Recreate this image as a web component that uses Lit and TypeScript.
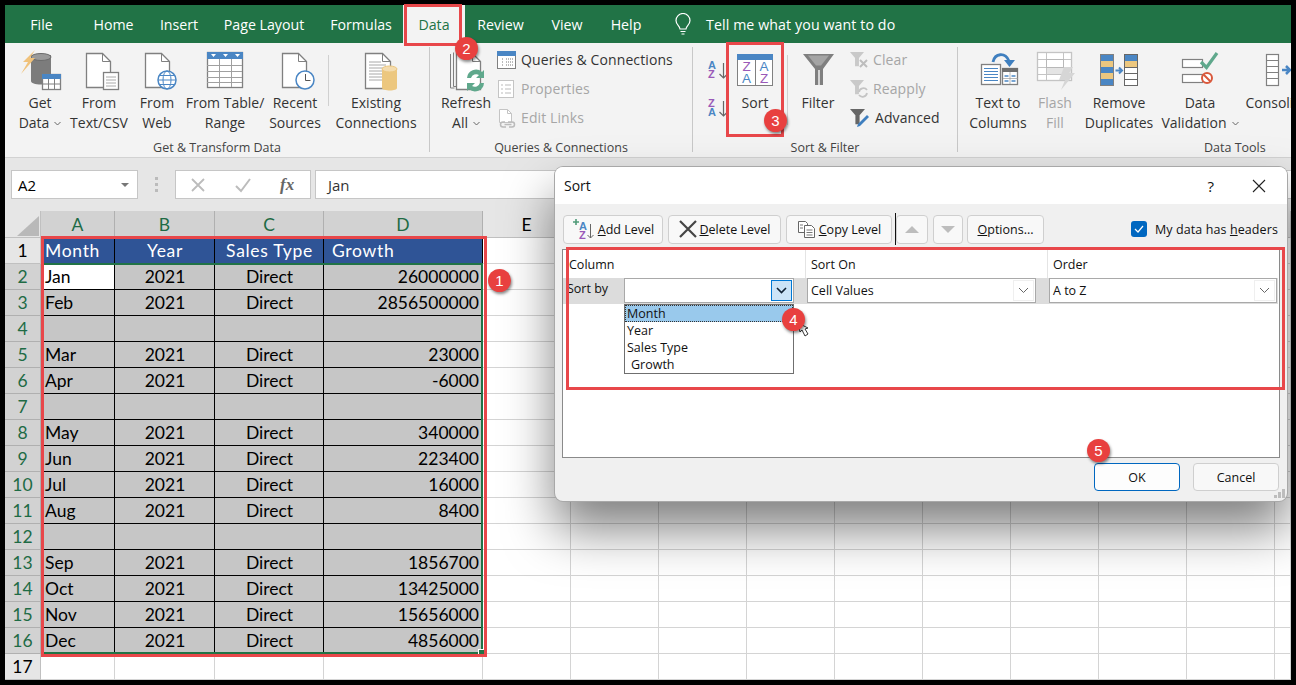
import { LitElement, html, css, svg } from "lit";
import { customElement } from "lit/decorators.js";

const G = "#808080", B = "#4a86c4", Y = "#ecc77f", P = "#9a5ab8", LG = "#c4c4c4", GR = "#5fa88c";

const doc = (x: number, y: number, w: number, h: number, c = G) =>
  svg`<path d="M${x + .5} ${y + .5}h${w - 8}l8 8v${h - 8}h-${w}z" fill="#fff" stroke="${c}" stroke-width="1.300"/><path d="M${x + w - 8 + .5} ${y + .5}v8h8" fill="none" stroke="${c}"/>`;
const funnel = (x: number, y: number, s: number, c: string) =>
  svg`<path d="M${x} ${y}h${s}l${-s * .36} ${s * .42}v${s * .6}h${-s * .28}v${-s * .6}z" fill="${c}"/>`;
const icons: Record<string, unknown> = {
  getData: svg`<path d="M14 8v26c0 2 4 3.500 10 3.500S34 36 34 34V8z" fill="#7c7c7c"/><ellipse cx="24" cy="10" rx="10" ry="3.500" fill="#9a9a9a" stroke="#6c6c6c"/><path d="M18 3L6 15h5L4 27l14-16h-5l5-8z" fill="#f0c27b"/><rect x="25.500" y="27.500" width="18" height="15" fill="#fff" stroke="${G}" stroke-width="1.300"/><rect x="25" y="27" width="19" height="5" fill="${B}"/><path d="M25 37h19M31.500 32v11M37.500 32v11" stroke="${G}"/>`,
  text: svg`${doc(10, 6, 24, 34)}<rect x="27.500" y="25.500" width="15" height="17" fill="#fff" stroke="${G}" stroke-width="1.300"/><path d="M30 30h10M30 33h10M30 36h10M30 39h10" stroke="#aaa"/>`,
  web: svg`${doc(11, 6, 24, 34)}<circle cx="33" cy="33" r="9" fill="#fff" stroke="${B}" stroke-width="1.500"/><ellipse cx="33" cy="33" rx="4" ry="9" fill="none" stroke="${B}"/><path d="M24 33h18M25.500 28.500h15M25.500 37.500h15" stroke="${B}"/>`,
  table: svg`<rect x="5.500" y="5.500" width="35" height="35" fill="#fff" stroke="${G}" stroke-width="1.300"/><rect x="5" y="5" width="36" height="7" fill="${B}"/><path d="M9 7h5l-2.500 3zM21 7h5l-2.500 3zM33 7h5l-2.500 3z" fill="#fff"/><path d="M5 18.500h35M5 24.500h35M5 30.500h35M5 35.500h35M17.500 12v28M29.500 12v28" stroke="#a0a0a0"/>`,
  recent: svg`${doc(10, 6, 24, 34)}<circle cx="33" cy="33" r="9" fill="#fff" stroke="${B}" stroke-width="1.500"/><path d="M33.500 27v6.500h5" fill="none" stroke="#555"/>`,
  existing: svg`${doc(12, 6, 25, 35)}<path d="M16 15h12M16 18h17M16 21h17M16 24h17M16 27h17M16 30h17M16 33h17" stroke="#a8a8a8"/><path d="M29 22v19c0 1.500 4 2.500 8 2.500s7-1 7-2.500V22z" fill="${Y}"/><ellipse cx="36.500" cy="22" rx="7.500" ry="3" fill="#f4dcae" stroke="${Y}"/>`,
  refresh: svg`<path d="M7.500 7v34h4M10.500 5.500v34h3" fill="none" stroke="${G}"/>${doc(13, 6, 24, 36)}<path d="M24 31a9 9 0 0 1 15-6l2-2v8h-8l3-3a5.500 5.500 0 0 0-8 3z" fill="${GR}"/><path d="M41 36a9 9 0 0 1-15 6l-2 2v-8h8l-3 3a5.500 5.500 0 0 0 8-3z" fill="${GR}"/>`,
  sortAZ: svg`<text x="1" y="11" class="ai" fill="${B}">A</text><text x="1" y="20" class="ai" fill="${P}">Z</text><path d="M16.500 5v15M12.500 16l4 4 4-4" fill="none" stroke="#666" stroke-width="1.200"/>`,
  sortZA: svg`<text x="1" y="11" class="ai" fill="${P}">Z</text><text x="1" y="20" class="ai" fill="${B}">A</text><path d="M16.500 5v15M12.500 16l4 4 4-4" fill="none" stroke="#666" stroke-width="1.200"/>`,
  sort: svg`<rect x="5.500" y="7.500" width="35" height="31" fill="#fff" stroke="${G}"/><rect x="5" y="7" width="36" height="6" fill="${B}"/><path d="M23.500 13v25" stroke="${G}"/><text x="14.500" y="24" class="az" fill="${P}">Z</text><text x="14.500" y="36" class="az" fill="${B}">A</text><text x="32" y="24" class="az" fill="${B}">A</text><text x="32" y="36" class="az" fill="${P}">Z</text>`,
  filter: svg`<path d="M8 7h31L28 22v16h-8V22z" fill="#7f7f7f"/><path d="M23 23h2v15h-2z" fill="#d4d4d4"/><path d="M13 8.500h21l-8 10h-5z" fill="#a4a4a4"/>`,
  ttc: svg`<path d="M18 15c2-9 12-10 16-1" fill="none" stroke="#3f7fbf" stroke-width="2.800"/><path d="M29 13h11l-5.500 7z" fill="#3f7fbf"/><rect x="6.500" y="17.500" width="19" height="20" fill="#fff" stroke="${G}" stroke-width="1.300"/><path d="M9 21.500h14M9 24.500h14M9 27.500h14M9 30.500h14M9 33.500h14" stroke="${B}"/><rect x="27.500" y="21.500" width="15" height="16" fill="#fff" stroke="${G}" stroke-width="1.300"/><rect x="27" y="21" width="16" height="4" fill="#6e6e6e"/><path d="M29.500 29h4M36.500 29h4M29.500 34h4M36.500 34h4" stroke="${B}" stroke-width="1.400"/><path d="M35 25v12M28 31.500h15" stroke="#999" stroke-width=".7"/>`,
  flash: svg`<g transform="translate(3 0)"><rect x="2.500" y="5.500" width="34" height="28" fill="#fff" stroke="${LG}" stroke-width="1.300"/><path d="M3 12.500h34M3 20.500h34M3 27.500h34M11.500 5v28M28.500 5v7M28.500 20v13" stroke="${LG}"/><rect x="11.500" y="12.500" width="17" height="8" fill="#fff" stroke="#b8b8b8"/><path d="M12 21h24v6H12z" fill="#e4e4e4"/><path d="M38 20H29l-5 13h6l-4 10 14-17h-6z" fill="#d6d6d6"/></g>`,
  dup: svg`<rect x="4.500" y="7.500" width="13" height="31" fill="${B}" stroke="${G}"/><rect x="5" y="14" width="12" height="6" fill="${Y}"/><rect x="5" y="26" width="12" height="6" fill="${Y}"/><rect x="28.500" y="7.500" width="13" height="31" fill="#fff" stroke="#666"/><rect x="29" y="8" width="12" height="6" fill="${B}"/><rect x="29" y="14" width="12" height="6" fill="${Y}"/><path d="M29 20.500h12M29 26.500h12M29 32.500h12" stroke="#666"/><path d="M19.500 23.500h5M23 20.500l3 3-3 3" fill="none" stroke="${B}" stroke-width="2"/>`,
  valid: svg`<rect x="5.500" y="12.500" width="20" height="8" fill="#fff" stroke="${G}" stroke-width="1.200"/><rect x="5.500" y="27.500" width="20" height="8" fill="#fff" stroke="${G}" stroke-width="1.200"/><path d="M24 15l5.500 5.500L40 6" fill="none" stroke="${GR}" stroke-width="3.200"/><circle cx="30" cy="31" r="5" fill="#fff" stroke="#d9583b" stroke-width="2"/><path d="M26.500 27.500l7 7" stroke="#d9583b" stroke-width="2"/>`,
  consol: svg`<rect x="5.500" y="7.500" width="12" height="31" fill="#fff" stroke="${G}" stroke-width="1.200"/><path d="M6 13.500h11M6 19.500h11M6 25.500h11M6 31.500h11" stroke="${G}"/><path d="M21 23h7M25 19l4 4-4 4" fill="none" stroke="${B}" stroke-width="2.500"/>`,
};
const small: Record<string, unknown> = {
  queries: svg`<rect x=".5" y="1.500" width="18" height="17" fill="#fff" stroke="${G}"/><rect y="1" width="19" height="5" fill="${B}"/><path d="M5 9h2M9 9h7M5 12h2M9 12h7M5 15h2M9 15h7" stroke="#777" stroke-dasharray="1 1"/>`,
  props: svg`<rect x="1.500" y="1.500" width="15" height="17" fill="#fff" stroke="${LG}"/><path d="M4 6h2M8 6h6M4 10h2M8 10h6M4 14h2M8 14h6" stroke="#bbb"/>`,
  links: svg`<path d="M2.500 1.500h8l4 4v9h-12z" fill="#fff" stroke="${LG}"/><path d="M10.500 1.500v4h4" fill="none" stroke="${LG}"/><path d="M8 14H6a2.500 2.500 0 0 0 0 5h3M11 14h4a2.500 2.500 0 0 1 0 5h-3M7.500 16.500h7" fill="none" stroke="#bbb" stroke-width="1.500"/>`,
  clear: svg`${funnel(0, 2, 14, "#c9c9c9")}<path d="M10 10l7 7M17 10l-7 7" stroke="#bdbdbd" stroke-width="2"/>`,
  reapply: svg`${funnel(0, 1, 14, "#c9c9c9")}<path d="M9 13a4.500 4.500 0 0 1 8-2M17 14a4.500 4.500 0 0 1-8 2" fill="none" stroke="#c4c4c4" stroke-width="1.800"/>`,
  advanced: svg`${funnel(0, 1, 15, "#666")}<path d="M7 19l1-3 9-9 2 2-9 9z" fill="#3f7fbf"/>`,
};

const chev = html`<svg class="chev" width="7" height="5" viewBox="0 0 7 5"><path d="M.5 1l3 3 3-3" fill="none" stroke="#666"/></svg>`;

interface Cmd { w: number; icon: string; a: string; b?: string; dim?: boolean; drop?: boolean }
const tabs: [string, number][] = [["File", 73], ["Home", 71], ["Insert", 60], ["Page Layout", 110], ["Formulas", 84], ["Data", 62], ["Review", 71], ["View", 62], ["Help", 56]];

const rowsData: [string, string, string][] = [
  ["Jan", "Direct", "26000000"], ["Feb", "Direct", "2856500000"], ["", "", ""], ["Mar", "Direct", "23000"],
  ["Apr", "Direct", "-6000"], ["", "", ""], ["May", "Direct", "340000"], ["Jun", "Direct", "223400"],
  ["Jul", "Direct", "16000"], ["Aug", "Direct", "8400"], ["", "", ""], ["Sep", "Direct", "1856700"],
  ["Oct", "Direct", "13425000"], ["Nov", "Direct", "15656000"], ["Dec", "Direct", "4856000"],
];

@customElement("app-root")
export class AppRoot extends LitElement {
  static styles = css`
    :host { display: block; width: 1296px; height: 685px; background: #000; overflow: hidden; position: relative; font-family: "Open Sans", sans-serif; }
    .frame { position: absolute; inset: 5px; display: flex; flex-direction: column; overflow: hidden; background: #fff; }
    .titlebar { height: 38px; background: #217346; display: flex; align-items: stretch; flex: none; color: #fff; font-size: 14.2px; }
    .tab { display: flex; align-items: center; justify-content: center; padding-top: 1px; }
    .tab.on { background: #f3f3f3; color: #217346; }
    .tell { display: flex; align-items: center; gap: 15px; padding-left: 21px; letter-spacing: .1px; }
    .ribbon { height: 115px; flex: none; background: #f3f3f3; border-bottom: 1px solid #d2d2d2; box-sizing: border-box; display: flex; overflow: hidden; color: #333; font-size: 14px; }
    .group { display: flex; flex-direction: column; border-right: 1px solid #c8c8c8; margin: 4px 0 5px; flex: none; box-sizing: border-box; }
    .g1 { width: 425px; } .g2 { width: 263px; } .g3 { width: 265px; } .g4 { width: 340px; border: 0; }
    .cmds { flex: 1; display: flex; align-items: flex-start; }
    .g1 .cmds { padding-left: 7px; } .g2 .cmds { padding-left: 8px; } .g3 .cmds { padding-left: 9px; } .g4 .cmds { padding-left: 8px; }
    .glabel { height: 15px; text-align: center; font-size: 12.5px; color: #444; line-height: 21px; white-space: nowrap; }
    .g4 .glabel { text-align: left; padding-left: 246px; }
    .cmd { display: flex; flex-direction: column; align-items: center; flex: none; line-height: 20px; white-space: nowrap; }
    .cmd svg.ic { display: block; height: 44px; margin-bottom: 2px; overflow: visible; }
    .cmd.dim { color: #a6a6a6; }
    .chev { margin-left: 5px; vertical-align: 2px; }
    .vsep { width: 1px; height: 51px; margin: 8px 3px 0 4px; background: #d0d0d0; flex: none; }
    .vsep.tall { margin-left: 7px; margin-right: 6px; height: 70px; }
    .stack { display: flex; flex-direction: column; flex: none; margin-top: -2px; letter-spacing: .1px; }
    .ml3 { margin-left: 3px; } .ml8 { margin-left: 8px; }
    .mini { display: flex; align-items: center; height: 29px; white-space: nowrap; gap: 5px; }
    .mini.dim { color: #a6a6a6; }
    .azcol { display: flex; flex-direction: column; gap: 15px; width: 28px; flex: none; padding: 11px 0 0 5px; box-sizing: border-box; }
    text.ai { font: 700 11px "Liberation Sans", sans-serif; }
    text.az { font: 400 13.5px "Liberation Sans", sans-serif; text-anchor: middle; }

    .fbar { height: 53px; flex: none; background: #e6e6e6; display: flex; align-items: center; padding: 0 0 0 6px; box-sizing: border-box; font-size: 15px; color: #333; }
    .box { background: #fff; border: 1px solid #c6c6c6; height: 29px; box-sizing: border-box; display: flex; align-items: center; }
    .name { width: 127px; padding: 0 8px 0 6px; justify-content: space-between; color: #000; }
    .tri { width: 0; height: 0; border: 4px solid transparent; border-top: 4px solid #777; border-bottom: 0; }
    .dots { width: 37px; display: flex; flex-direction: column; align-items: center; gap: 3px; flex: none; }
    .dots i { width: 3px; height: 3px; background: #bbb; display: block; }
    .fx { width: 136px; gap: 29px; padding-left: 14px; margin-right: 4px; }
    .fxt { font: italic 700 17px "Liberation Serif", serif; color: #666; }
    .input { flex: 1; padding-left: 12px; border-right: 0; }

    .sheet { position: relative; flex: 1; display: grid; grid-template-columns: 36px 74px 100px 109px 159px repeat(9, 88px) 16px; grid-template-rows: 27px repeat(17, 26px); font-family: Lato, sans-serif; font-size: 17.5px; color: #000; }
    .c { border-right: 1px solid #d4d4d4; border-bottom: 1px solid #d4d4d4; box-sizing: border-box; display: flex; align-items: center; white-space: nowrap; overflow: hidden; }
    .hd { background: #e6e6e6; justify-content: center; border-color: #c0c0c0; }
    .hd.sel { background: #d2d2d2; color: #1e6b45; border-color: #b0b0b0; }
    .hd.corner { position: relative; }
    .corner svg { position: absolute; right: 1px; bottom: 1px; }
    .d { background: #c6c6c6; border-color: #000; padding: 0 3px 0 4px; }
    .d.mid { justify-content: center; }
    .d.rt { justify-content: flex-end; }
    .d.white { background: #fff; }
    .d.h { background: #2f5496; color: #fff; letter-spacing: .7px; }
    .d.h.gr { padding-left: 8px; }
    .sel-box { position: absolute; left: 36px; top: 52px; width: 442px; height: 391px; box-sizing: border-box; border: 2px solid #217346; border-left: 0; pointer-events: none; }
    .handle { position: absolute; right: -4px; bottom: -4px; width: 5px; height: 5px; background: #217346; border: 1px solid #fff; }
    .red { position: absolute; border: 3px solid #e8474a; box-sizing: border-box; pointer-events: none; }
    .r1 { left: 41px; top: 236px; width: 446px; height: 421px; }
    .r2 { left: 404px; top: 4px; width: 58px; height: 42px; }
    .r3 { left: 726px; top: 42px; width: 58px; height: 95px; }
    .r4 { left: 566px; top: 247px; width: 719px; height: 143px; }
    .badge { position: absolute; width: 23px; height: 23px; border-radius: 50%; background: #e8403f; color: #fff; font: 400 15px/23px "Liberation Sans", sans-serif; text-align: center; box-shadow: 1px 2px 3px rgba(0,0,0,.45); }
    .b1 { left: 488px; top: 269px; } .b2 { left: 455px; top: 37px; } .b3 { left: 764px; top: 109px; } .b4 { left: 782px; top: 308px; } .b5 { left: 1087px; top: 439px; }
    .cursor { position: absolute; left: 795px; top: 321px; }

    .dialog { position: absolute; left: 555px; top: 167px; width: 732px; height: 334px; border-radius: 8px; background: #f0f0f0; box-shadow: 0 0 0 1px #a8a8a8, 0 28px 50px rgba(0,0,0,.5); display: flex; flex-direction: column; overflow: hidden; font-size: 12.5px; color: #111; }
    .dtitle { height: 37px; background: #fff; flex: none; display: flex; align-items: center; padding: 0 21px 0 9px; font-size: 14px; }
    .dtitle .q { margin-left: auto; margin-right: 38px; font-size: 15px; }
    .dbody { flex: 1; display: flex; flex-direction: column; padding: 10px 7px 0 7px; }
    .tools { display: flex; align-items: center; height: 30px; gap: 5px; flex: none; padding-left: 1px; }
    .btn { height: 29px; box-sizing: border-box; border: 1px solid #cfcfcf; border-radius: 4px; background: #f8f8f8; display: flex; align-items: center; justify-content: center; gap: 3px; white-space: nowrap; flex: none; }
    .black { width: 1px; height: 32px; background: #111; margin: 0 -5px 0 -2px; flex: none; }
    .arrow { width: 0; height: 0; border: 7px solid transparent; border-top: 0; border-bottom: 7px solid #bdbdbd; }
    .arrow.dn { border-bottom: 0; border-top: 7px solid #bdbdbd; }
    .chk { margin-left: auto; display: flex; align-items: center; gap: 8px; padding-right: 2px; letter-spacing: .1px; }
    .box16 { width: 16px; height: 16px; background: #0067c0; border-radius: 3px; display: flex; align-items: center; justify-content: center; }
    .list { margin-top: 5px; height: 209px; border: 1px solid #8a8a8a; background: #fff; flex: none; box-sizing: border-box; }
    .lhead { display: grid; grid-template-columns: 243px 242px 1fr; height: 28px; align-items: center; }
    .lhead span { padding-left: 6px; height: 100%; display: flex; align-items: center; box-sizing: border-box; border-right: 1px solid #e4e4e4; }
    .lhead .s2 { padding-left: 5px; } .lhead .s3 { padding-left: 5px; border: 0; }
    .lrow { display: grid; grid-template-columns: 61px 170px 13px 229px 13px 228px; height: 26px; background: #dcdcdc; margin-right: 1px; }
    .lab { padding: 0 0 5px 4px; display: flex; align-items: center; }
    .combo { background: #fff; border: 1px solid #a9a9a9; box-sizing: border-box; display: flex; align-items: center; justify-content: space-between; padding: 0 1px 0 3px; height: 25px; position: relative; }
    .combo.end { justify-content: flex-end; }
    .cb { width: 21px; height: 21px; box-sizing: border-box; display: flex; align-items: center; justify-content: center; border: 1px solid #efefef; }
    .cb.act { background: #cce4f7; border: 1px solid #0078d4; }
    .drop { position: absolute; left: -1px; top: 25px; width: 170px; height: 70px; box-sizing: border-box; background: #fff; border: 1px solid #6f6f6f; }
    .drop div { height: 17px; line-height: 17px; padding-left: 2px; box-sizing: border-box; }
    .drop .hi { background: #99c9ec; outline: 1px dotted #333; outline-offset: -1px; }
    .drop .ind { padding-left: 6px; }
    .dfoot { display: flex; justify-content: flex-end; gap: 13px; padding: 5px 1px 0 0; }
    .ok { width: 86px; height: 28px; border-color: #0067c0; background: #fdfdfd; }
    .cancel { width: 86px; height: 28px; }
    .grip { position: absolute; right: 2px; bottom: 3px; }
    .w100 { width: 100px; } .w113 { width: 113px; } .w106 { width: 106px; } .w32 { width: 32px; } .w30 { width: 30px; } .w77 { width: 77px; margin-left: -1px; }
  `;

  private cmd(c: Cmd) {
    return html`<div class="cmd ${c.dim ? "dim" : ""}" style="width:${c.w}px">
      <svg class="ic" width="46" height="44" viewBox="0 0 46 44">${icons[c.icon]}</svg>
      <div>${c.a}</div><div>${c.b ?? ""}${c.drop ? chev : ""}</div>
    </div>`;
  }
  private mini(icon: string, label: string, dim = false, w = 19) {
    return html`<div class="mini ${dim ? "dim" : ""}"><svg width="${w}" height="20" viewBox="0 0 ${w} 20">${small[icon]}</svg>${label}</div>`;
  }

  private sheet() {
    const letters = ["A", "B", "C", "D", "E", "", "", "", "", "", "", "", "", ""];
    const blanks = Array.from({ length: 10 }, () => html`<div class="c"></div>`);
    return html`<div class="sheet">
      <div class="c hd corner"><svg width="22" height="20" viewBox="0 0 22 20"><path d="M22 0v20H0z" fill="#b9b9b9"/></svg></div>
      ${letters.map((l, i) => html`<div class="c hd ${i < 4 ? "sel" : ""}">${l}</div>`)}
      <div class="c hd">1</div>
      <div class="c d h">Month</div><div class="c d h mid">Year</div><div class="c d h mid">Sales Type</div><div class="c d h gr">Growth</div>
      ${blanks}
      ${rowsData.map((r, i) => html`
        <div class="c hd sel">${i + 2}</div>
        <div class="c d ${i === 0 ? "white" : ""}">${r[0]}</div>
        <div class="c d mid">${r[0] ? "2021" : ""}</div>
        <div class="c d mid">${r[1]}</div>
        <div class="c d rt">${r[2]}</div>
        ${blanks}`)}
      <div class="c hd">17</div>
      ${Array.from({ length: 14 }, () => html`<div class="c"></div>`)}
      <div class="sel-box"><div class="handle"></div></div>
    </div>`;
  }

  private dialog() {
    const cv = html`<svg width="11" height="7" viewBox="0 0 11 7"><path d="M1 1l4.500 4.500L10 1" fill="none" stroke="#666"/></svg>`;
    return html`<div class="dialog">
      <div class="dtitle"><span>Sort</span><span class="q">?</span>
        <svg width="14" height="14" viewBox="0 0 14 14"><path d="M1 1l12 12M13 1L1 13" stroke="#222" stroke-width="1.100"/></svg></div>
      <div class="dbody">
        <div class="tools">
          <div class="btn w100"><svg width="23" height="22" viewBox="0 0 23 22"><path d="M1 4h6M4 1v6" stroke="#4f9a78" stroke-width="1.600"/><text x="7" y="12" class="ai" fill="${B}">A</text><text x="7" y="21" class="ai" fill="${P}">Z</text><path d="M18.500 6v14M15.500 17l3 3 3-3" fill="none" stroke="#666"/></svg><span><u>A</u>dd Level</span></div>
          <div class="btn w113"><svg width="18" height="18" viewBox="0 0 18 18"><path d="M1 1l16 16M17 1L1 17" stroke="#444" stroke-width="2.200"/></svg><span><u>D</u>elete Level</span></div>
          <div class="btn w106"><svg width="19" height="18" viewBox="0 0 19 18"><path d="M1.500 1.500h7l2 2v9h-9z" fill="#fff" stroke="#666"/><path d="M7.500 5.500h7l3 3v9h-10z" fill="#fff" stroke="#666"/><path d="M9.500 10h6M9.500 12.500h6M9.500 15h6M3 5h3M3 8h3" stroke="#777"/></svg><span><u>C</u>opy Level</span></div>
          <div class="black"></div>
          <div class="btn w32"><div class="arrow"></div></div>
          <div class="btn w30"><div class="arrow dn"></div></div>
          <div class="btn w77"><span><u>O</u>ptions...</span></div>
          <div class="chk"><div class="box16"><svg width="10" height="8" viewBox="0 0 10 8"><path d="M1 4l3 3 5-6" fill="none" stroke="#fff" stroke-width="1.200"/></svg></div><span>My data has <u>h</u>eaders</span></div>
        </div>
        <div class="list">
          <div class="lhead"><span>Column</span><span class="s2">Sort On</span><span class="s3">Order</span></div>
          <div class="lrow">
            <div class="lab">Sort by</div>
            <div class="combo end"><div class="cb act"><svg width="11" height="7" viewBox="0 0 11 7"><path d="M1 1l4.500 4.500L10 1" fill="none" stroke="#123" stroke-width="1.600"/></svg></div>
              <div class="drop"><div class="hi">Month</div><div>Year</div><div>Sales Type</div><div class="ind">Growth</div></div></div>
            <div></div>
            <div class="combo"><span>Cell Values</span><div class="cb">${cv}</div></div>
            <div></div>
            <div class="combo"><span>A to Z</span><div class="cb">${cv}</div></div>
          </div>
        </div>
        <div class="dfoot"><div class="btn ok"><span>OK</span></div><div class="btn cancel"><span>Cancel</span></div></div>
      </div>
      <svg class="grip" width="11" height="9" viewBox="0 0 11 9"><path d="M8 0h3v3H8zM4 3h3v3H4zM8 3h3v3H8zM0 6h3v3H0zM4 6h3v3H4zM8 6h3v3H8z" fill="#bdbdbd"/></svg>
    </div>`;
  }

  render() {
    return html`
      <div class="frame">
        <div class="titlebar">
          ${tabs.map(([t, w]) => html`<div class="tab ${t === "Data" ? "on" : ""}" style="width:${w}px">${t}</div>`)}
          <div class="tell">
            <svg width="16" height="23" viewBox="0 0 16 23"><path d="M5 16c0-3-4-4-4-8.500a7 7 0 0 1 14 0C15 12 11 13 11 16zM5.500 18.500h5M6.500 21h3" fill="none" stroke="#fff" stroke-width="1.200"/></svg>
            <span>Tell me what you want to do</span>
          </div>
        </div>
        <div class="ribbon">
          <div class="group g1">
            <div class="cmds">
              ${this.cmd({ w: 56, icon: "getData", a: "Get", b: "Data", drop: true })}
              ${this.cmd({ w: 62, icon: "text", a: "From", b: "Text/CSV" })}
              ${this.cmd({ w: 54, icon: "web", a: "From", b: "Web" })}
              ${this.cmd({ w: 82, icon: "table", a: "From Table/", b: "Range" })}
              ${this.cmd({ w: 58, icon: "recent", a: "Recent", b: "Sources" })}
              <div class="vsep"></div>
              ${this.cmd({ w: 88, icon: "existing", a: "Existing", b: "Connections" })}
            </div>
            <div class="glabel">Get &amp; Transform Data</div>
          </div>
          <div class="group g2">
            <div class="cmds">
              ${this.cmd({ w: 56, icon: "refresh", a: "Refresh", b: "All", drop: true })}
              <div class="stack ml3">
                ${this.mini("queries", "Queries & Connections")}
                ${this.mini("props", "Properties", true)}
                ${this.mini("links", "Edit Links", true)}
              </div>
            </div>
            <div class="glabel">Queries &amp; Connections</div>
          </div>
          <div class="group g3">
            <div class="cmds">
              <div class="azcol">
                <svg width="22" height="23" viewBox="0 0 22 23">${icons.sortAZ}</svg>
                <svg width="22" height="23" viewBox="0 0 22 23">${icons.sortZA}</svg>
              </div>
              ${this.cmd({ w: 50, icon: "sort", a: "Sort" })}
              <div class="vsep tall"></div>
              ${this.cmd({ w: 48, icon: "filter", a: "Filter" })}
              <div class="stack ml8">
                ${this.mini("clear", "Clear", true, 18)}
                ${this.mini("reapply", "Reapply", true, 18)}
                ${this.mini("advanced", "Advanced", false, 20)}
              </div>
            </div>
            <div class="glabel">Sort &amp; Filter</div>
          </div>
          <div class="group g4">
            <div class="cmds">
              ${this.cmd({ w: 64, icon: "ttc", a: "Text to", b: "Columns" })}
              ${this.cmd({ w: 50, icon: "flash", a: "Flash", b: "Fill", dim: true })}
              ${this.cmd({ w: 78, icon: "dup", a: "Remove", b: "Duplicates" })}
              ${this.cmd({ w: 84, icon: "valid", a: "Data", b: "Validation", drop: true })}
              ${this.cmd({ w: 84, icon: "consol", a: "Consolidate", b: "" })}
            </div>
            <div class="glabel">Data Tools</div>
          </div>
        </div>
        <div class="fbar">
          <div class="box name"><span>A2</span><div class="tri"></div></div>
          <div class="dots"><i></i><i></i><i></i></div>
          <div class="box fx">
            <svg width="16" height="16" viewBox="0 0 16 16"><path d="M2 2l12 12M14 2L2 14" stroke="#bcbcbc" stroke-width="1.800"/></svg>
            <svg width="16" height="16" viewBox="0 0 16 16"><path d="M1 9l5 5L15 2" fill="none" stroke="#bcbcbc" stroke-width="2"/></svg>
            <span class="fxt">fx</span>
          </div>
          <div class="box input">Jan</div>
        </div>
        ${this.sheet()}
      </div>
      ${this.dialog()}
      <div class="red r1"></div><div class="red r2"></div><div class="red r3"></div><div class="red r4"></div>
      <svg class="cursor" width="14" height="18" viewBox="0 0 14 18"><path d="M3 2l2 9 2-2 3 6 3-2-3-5 3-1z" fill="#fff" stroke="#333"/></svg>
      <div class="badge b1">1</div><div class="badge b2">2</div><div class="badge b3">3</div><div class="badge b4">4</div><div class="badge b5">5</div>
    `;
  }
}
